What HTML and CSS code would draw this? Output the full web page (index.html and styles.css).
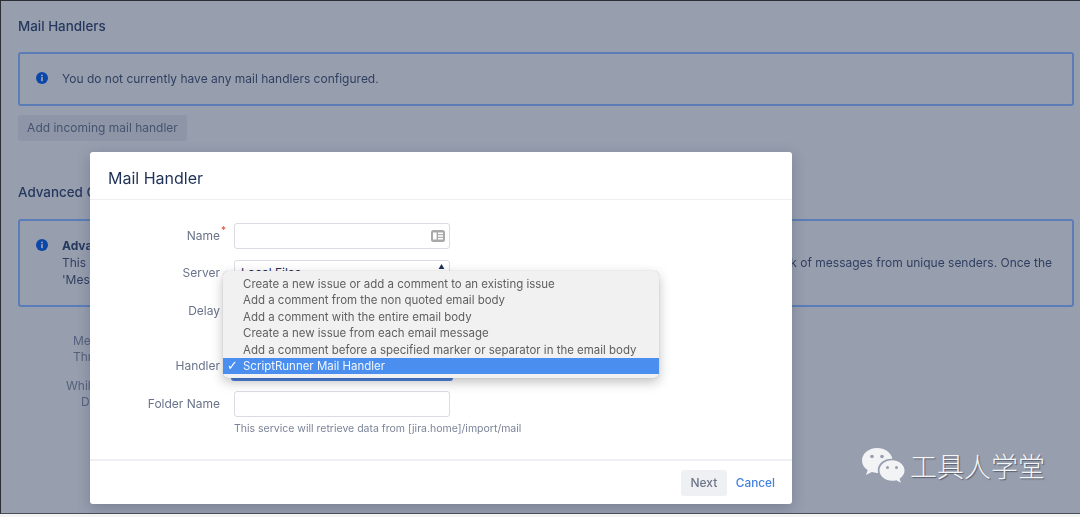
FILE: index.html
```html
<!DOCTYPE html>
<html lang="en">
<head>
<meta charset="utf-8">
<title>Mail Handler</title>
<link rel="stylesheet" href="styles.css">
</head>
<body>
<div class="screen">
  <main class="page">
    <h2 class="heading">Mail Handlers</h2>
    <div class="notice notice-short">
      <svg class="info" viewBox="0 0 12 12"><circle cx="6" cy="6" r="6"/><rect x="5.1" y="5.2" width="1.8" height="4" fill="#979eae"/><circle cx="6" cy="3.5" r="1" fill="#979eae"/></svg>
      <p>You do not currently have any mail handlers configured.</p>
    </div>
    <button class="add-btn">Add incoming mail handler</button>
    <h2 class="heading heading-adv">Advanced Configuration</h2>
    <div class="notice notice-tall">
      <svg class="info" viewBox="0 0 12 12"><circle cx="6" cy="6" r="6"/><rect x="5.1" y="5.2" width="1.8" height="4" fill="#979eae"/><circle cx="6" cy="3.5" r="1" fill="#979eae"/></svg>
      <div class="notice-body">
        <strong>Advanced settings</strong>
        <p class="line-right"><span>This</span><span>k of messages from unique senders. Once the</span></p>
        <p>'Message</p>
      </div>
    </div>
    <div class="adv-rows">
      <div class="adv-row"><span class="a1">Messages</span><span class="a2">Throttle</span></div>
      <div class="adv-row"><span class="a3">While</span><span class="a4">D</span></div>
    </div>
  </main>

  <section class="modal">
    <header class="modal-head">Mail Handler</header>
    <div class="modal-body">
      <div class="row row-name">
        <label class="lbl">Name<sup class="req">*</sup></label>
        <div class="input input-name">
          <svg class="card" viewBox="0 0 14 12"><rect width="14" height="12" rx="2.500" fill="#a8a8a8"/><rect x="2" y="2.500" width="3.600" height="7" fill="#fff"/><rect x="7" y="2.500" width="5" height="1.600" fill="#fff"/><rect x="7" y="5.200" width="5" height="1.600" fill="#fff"/><rect x="7" y="7.900" width="5" height="1.600" fill="#fff"/></svg>
        </div>
      </div>
      <div class="row row-server">
        <label class="lbl">Server</label>
        <div class="input input-server"><span class="server-val">Local Files</span><svg class="updown" viewBox="0 0 8 6"><path d="M4 0 7.500 6H.5z"/></svg></div>
      </div>
      <div class="row row-delay"><label class="lbl">Delay</label></div>
      <div class="row row-handler">
        <label class="lbl">Handler</label>
        <div class="handler-select"></div>
      </div>
      <div class="row row-folder">
        <label class="lbl">Folder Name</label>
        <div class="input"></div>
      </div>
      <p class="hint">This service will retrieve data from [jira.home]/import/mail</p>
    </div>
    <footer class="modal-foot">
      <button class="next">Next</button>
      <a class="cancel">Cancel</a>
    </footer>
  </section>

  <ul class="menu">
    <li>Create a new issue or add a comment to an existing issue</li>
    <li>Add a comment from the non quoted email body</li>
    <li>Add a comment with the entire email body</li>
    <li>Create a new issue from each email message</li>
    <li>Add a comment before a specified marker or separator in the email body</li>
    <li class="sel"><span class="tick">✓</span>ScriptRunner Mail Handler</li>
  </ul>

  <div class="mark">
    <svg class="wechat" viewBox="0 0 44 38">
      <path fill="#f2f3f5" d="M16 1C7.500 1 1 6.600 1 13.500c0 4 2.200 7.400 5.700 9.700L5 28l5.800-2.900c1.700.5 3.400.8 5.200.8h1.200a11 11 0 0 1-.4-2.900c0-6.300 6-11.200 13.600-11.200h1C30.200 5.600 23.800 1 16 1z"/>
      <circle cx="11" cy="9.500" r="1.800" fill="#979eae"/><circle cx="21" cy="9.500" r="1.800" fill="#979eae"/>
      <path fill="#f2f3f5" d="M43.500 23.500c0-5.800-5.700-10.300-12.500-10.300s-12.500 4.500-12.500 10.300S24.200 33.800 31 33.800c1.500 0 2.900-.2 4.200-.6l4.700 2.600-1.300-4.100c3-2 4.900-4.900 4.900-8.200z"/>
      <circle cx="26.500" cy="20.500" r="1.500" fill="#979eae"/><circle cx="35.500" cy="20.500" r="1.500" fill="#979eae"/>
    </svg>
    <span class="mark-text">工具人学堂</span>
  </div>
</div>
</body>
</html>
```

FILE: styles.css
```css
* { box-sizing: border-box; }
html, body { margin: 0; padding: 0; }
body {
  width: 1080px;
  height: 517px;
  background: #f4f4f4;
  overflow: hidden;
  font-family: Inter, Roboto, "Noto Sans CJK SC", sans-serif;
}
.screen {
  position: relative;
  height: 514px;
  overflow: hidden;
  background: #979eae;
  border-top: 1px solid #2b2e33;
  border-bottom: 1px solid #4a4e57;
  border-left: 1px solid #2b2e33;
  color: #26385e;
}
.page {
  display: flex;
  flex-direction: column;
  align-items: flex-start;
  padding: 0 6px 0 17px;
  filter: blur(0.5px);
}
.heading {
  margin: 17px 0 0;
  font-size: 13.400px;
  line-height: 16px;
  font-weight: 500;
  color: #26385e;
}
.heading-adv { margin-top: 43px; }
.notice {
  display: flex;
  width: 1056px;
  margin-top: 18px;
  padding: 0 16px;
  border: 2px solid #5a7db8;
  border-radius: 3px;
  font-size: 12px;
  line-height: 17px;
  color: #303f60;
}
.notice p { margin: 0; }
.notice-short { height: 54px; align-items: center; padding-bottom: 2px; }
.notice-short p { margin-left: 14px; }
.notice-tall { height: 88px; padding-top: 16px; margin-top: 19px; }
.info { flex: none; width: 12px; height: 12px; fill: #0b47a8; margin-top: 2px; }
.notice-short .info { margin-top: 0; }
.notice-body { flex: 1; margin-left: 14px; }
.notice-body strong { display: block; font-weight: 700; color: #26385e; }
.line-right { display: flex; justify-content: space-between; padding-right: 4px; }
.add-btn {
  width: 169px;
  height: 26px;
  margin-top: 9px;
  padding: 0 0 2px;
  border: 0;
  border-radius: 3px;
  background: #8d95a7;
  font: 400 12px Inter, Roboto, sans-serif;
  color: #465370;
}
.adv-rows { display: flex; flex-direction: column; margin: 26px 0 0 40px; font-size: 12px; line-height: 16px; color: #55617c; }
.adv-row { display: flex; flex-direction: column; margin-bottom: 13px; }
.a3 { margin-left: 8px; }
.a4 { margin-left: 23px; }
.a1, .a2 { margin-left: 15px; }

.modal {
  position: absolute;
  left: 89px;
  top: 151px;
  width: 702px;
  height: 352px;
  display: flex;
  flex-direction: column;
  background: #fff;
  border-radius: 3px;
  box-shadow: 0 4px 14px rgba(50, 60, 85, .3);
  filter: blur(0.4px);
}
.modal-head {
  height: 48px;
  flex: none;
  padding: 16px 0 0 18px;
  font-size: 16px;
  line-height: 20px;
  font-weight: 400;
  color: #1f3157;
  border-bottom: 1px solid #edeff3;
}
.modal-body { flex: 1; padding-top: 23px; border-bottom: 2px solid #edeff3; position: relative; }
.row { display: flex; align-items: center; }
.lbl {
  flex: none;
  width: 130px;
  text-align: right;
  font-size: 12px;
  line-height: 16px;
  color: #69738a;
  font-weight: 400;
}
.row-name .lbl { padding-right: 1px; }
.req { color: #e8482c; font-size: 10px; line-height: 0; position: relative; top: -1px; left: 1px; margin-right: -6px; }
.input {
  position: relative;
  flex: none;
  width: 216px;
  height: 26px;
  margin-left: 14px;
  border: 1px solid #d9dce3;
  border-radius: 3px;
  background: #fff;
}
.card { position: absolute; right: 4px; top: 6px; width: 14px; height: 12px; }
.row-server { margin-top: 11px; height: 26px; }
.input-server { padding-left: 6px; font-size: 12px; line-height: 24px; color: #1f3157; }
.updown { position: absolute; right: 4px; top: 3px; width: 7px; height: 5px; fill: #1f3157; }
.row-delay { margin-top: 12px; height: 26px; }
.row-handler { margin-top: 27px; height: 30px; }
.handler-select {
  flex: none;
  width: 222px;
  height: 30px;
  margin-left: 11px;
  border-radius: 3px;
  background: #4f83e0;
}
.row-folder { margin-top: 10px; }
.hint {
  margin: 5px 0 0 144px;
  font-size: 10.500px;
  line-height: 13px;
  color: #7a8498;
}
.modal-foot {
  height: 43px;
  flex: none;
  display: flex;
  align-items: center;
  justify-content: flex-end;
  padding: 0 17px 0 0;
}
.next {
  width: 46px;
  height: 26px;
  border: 0;
  padding: 0;
  border-radius: 3px;
  background: #eff0f3;
  font: 500 12px Inter, Roboto, sans-serif;
  color: #6d7689;
}
.cancel { margin-left: 9px; font-size: 11.800px; font-weight: 500; color: #3f7fe0; }

.menu {
  position: absolute;
  left: 222px;
  top: 270px;
  width: 436px;
  margin: 0;
  padding: 5px 0 4px;
  list-style: none;
  background: #f1f1f1;
  border-radius: 5px;
  box-shadow: 0 0 1px rgba(0,0,0,.3), 0 4px 12px rgba(0,0,0,.25);
  font-size: 11.470px;
  line-height: 16.400px;
  color: #5f5f5f;
  filter: blur(0.35px);
}
.menu li { padding-left: 20px; white-space: nowrap; position: relative; }
.menu .sel { background: #4a8ff0; color: #f2f6fd; }
.tick { position: absolute; left: 4px; top: 0; font-family: "DejaVu Sans", sans-serif; font-size: 13px; font-weight: 700; color: #fff; }

.mark {
  position: absolute;
  left: 860px;
  top: 446px;
  display: flex;
  align-items: center;
  gap: 5px;
  color: #f4f5f7;
}
.wechat { width: 44px; height: 38px; }
.mark-text {
  font-family: "Noto Sans CJK SC", sans-serif;
  font-size: 27px;
  line-height: 30px;
  font-weight: 300;
  letter-spacing: 0;
  text-shadow: 1px 1px 1px rgba(60, 65, 80, .7);
}
```
